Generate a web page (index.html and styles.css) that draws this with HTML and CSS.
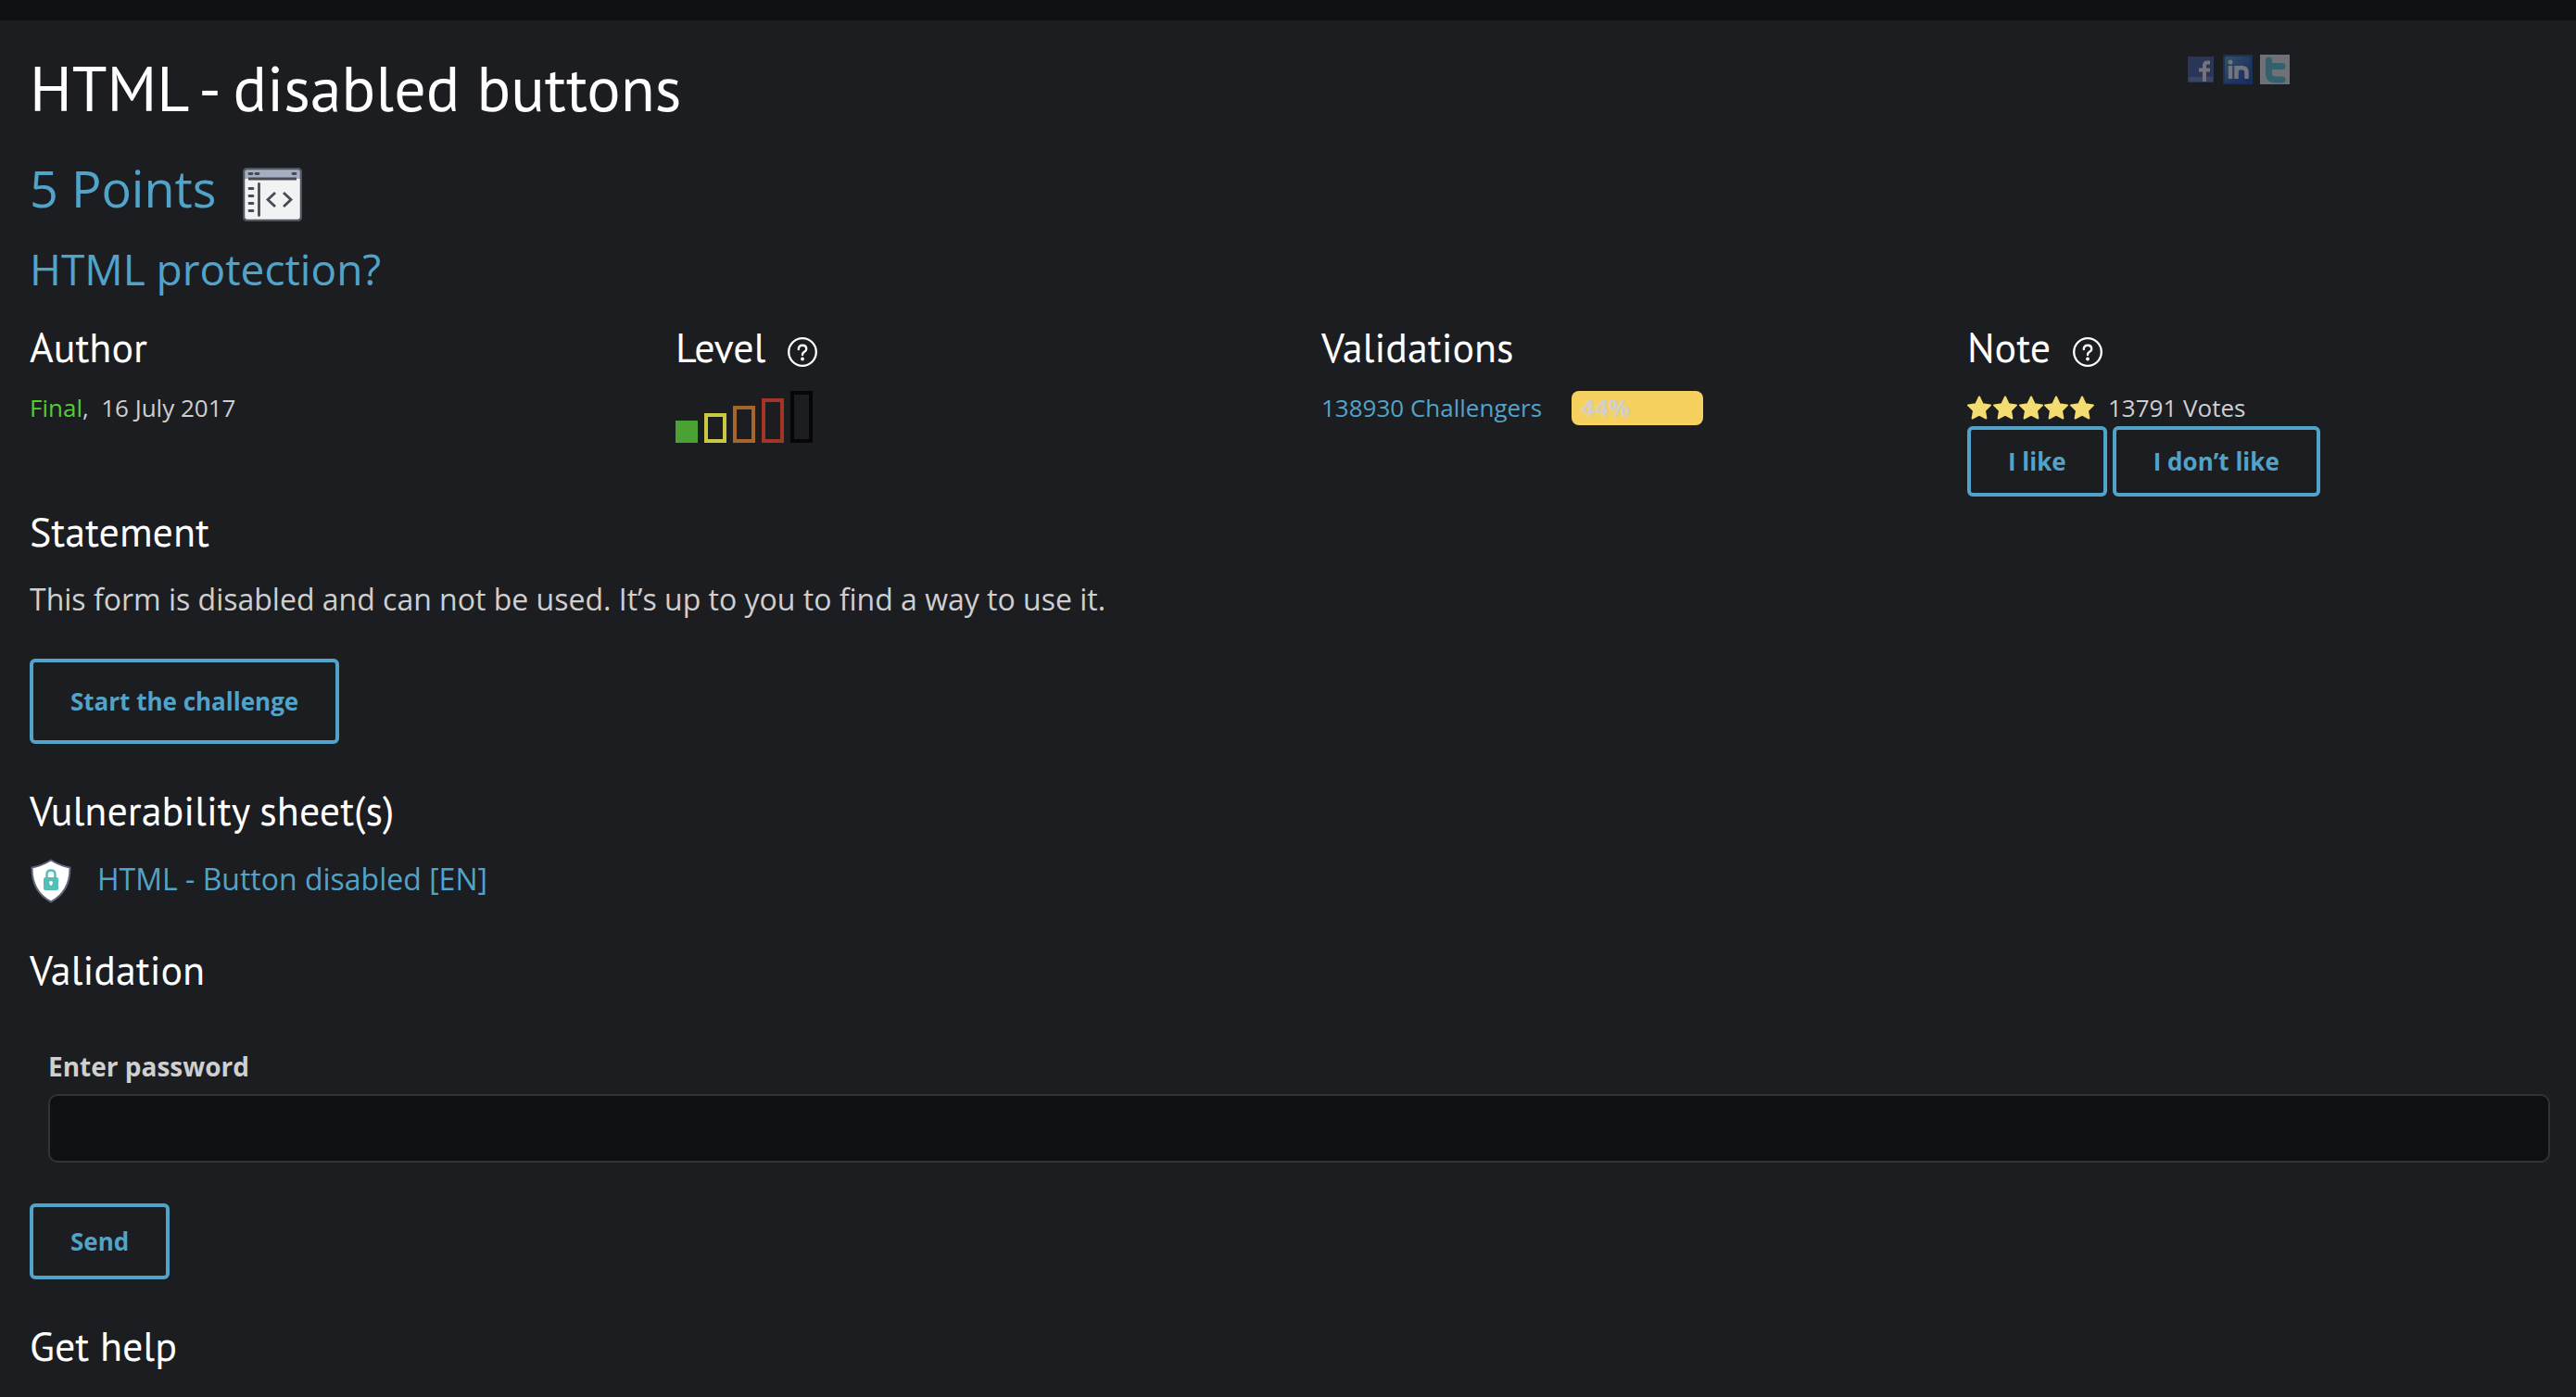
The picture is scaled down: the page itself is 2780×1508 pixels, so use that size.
FILE: index.html
```html
<!DOCTYPE html>
<html lang="en">
<head>
<meta charset="utf-8">
<title>HTML - disabled buttons</title>
<link rel="stylesheet" href="styles.css">
</head>
<body>
<div class="topbar"></div>
<main class="page">
  <header class="page-head">
    <h1 class="title">HTML - disabled buttons</h1>
    <nav class="share" aria-label="Share">
      <a href="#facebook" aria-label="Facebook"><svg width="32" height="32" viewBox="0 0 32 32"><rect x="2" y="2" width="28" height="28" fill="#38508f"/><rect x="3" y="24" width="26" height="5" fill="#5a70a8"/><path d="M26 8.500h-3q-3 0-3 3.500v17M14 16.500h12" fill="none" stroke="#c9c9d0" stroke-width="4"/></svg></a>
      <a href="#linkedin" aria-label="LinkedIn"><svg width="32" height="32" viewBox="0 0 32 32"><defs><linearGradient id="li" x1="0" y1="0" x2="1" y2="1"><stop offset="0" stop-color="#4a84a8"/><stop offset="1" stop-color="#1434a4"/></linearGradient></defs><rect width="32" height="32" fill="#1b4888"/><rect x="2" y="2" width="28" height="28" rx="2" fill="url(#li)"/><path d="M8 12v14M14.500 26V12M14.500 19q0-5 5-5 6 0 6 5v7" fill="none" stroke="#c9ccd4" stroke-width="4.500"/><circle cx="8" cy="8" r="2.500" fill="#c9ccd4"/></svg></a>
      <a href="#twitter" aria-label="Twitter"><svg width="32" height="32" viewBox="0 0 32 32"><rect width="32" height="32" fill="#c4c4cc"/><path d="M9.500 6v14q0 7 7 7H24M9.500 12.500H24" fill="none" stroke="#48a4b8" stroke-width="7" stroke-linecap="round"/></svg></a>
    </nav>
  </header>

  <div class="points"><span>5 Points</span>
    <svg width="64" height="58" viewBox="0 0 64 58"><rect x="1" y="1" width="62" height="56" rx="4" fill="#f1f3f3"/><path d="M2 12V5q0-3 3-3h54q3 0 3 3v7z" fill="#a6afc2"/><rect x="1" y="1" width="62" height="56" rx="4" fill="none" stroke="#50565e" stroke-width="2.500"/><path d="M6 12h52" stroke="#454b52" stroke-width="3"/><path d="M7 6.500h3M14 6.500h3M54 6.500h3M7 22.500h4M7 30.500h4M7 38.500h4M7 46.500h4M17.500 17.500v34" stroke="#454b52" stroke-width="2.800" stroke-linecap="round"/><path d="M35 27l-8 7.500 8 7.500M44 27l8 7.500-8 7.500" fill="none" stroke="#454b52" stroke-width="2.800"/></svg>
  </div>
  <p class="tagline">HTML protection?</p>

  <section class="facts">
    <div>
      <h2 class="heading">Author</h2>
      <p class="meta"><a class="author" href="#final">Final</a>,&nbsp; 16 July 2017</p>
    </div>
    <div>
      <h2 class="heading">Level <a class="help" href="#level-help" aria-label="About levels"><svg width="32" height="32" viewBox="0 0 32 32"><use href="#help-icon"/></svg></a></h2>
      <div class="level" role="img" aria-label="Very easy"><i class="bar bar-1"></i><i class="bar bar-2"></i><i class="bar bar-3"></i><i class="bar bar-4"></i><i class="bar bar-5"></i></div>
    </div>
    <div>
      <h2 class="heading">Validations</h2>
      <p class="meta"><a href="#challengers">138930 Challengers</a><span class="rate">44%</span></p>
    </div>
    <div>
      <h2 class="heading">Note <a class="help" href="#note-help" aria-label="About notes"><svg width="32" height="32" viewBox="0 0 32 32"><use href="#help-icon"/></svg></a></h2>
      <p class="meta"><svg class="stars" width="138" height="26" viewBox="0 0 138 26"><use href="#star"/><use href="#star" x="28"/><use href="#star" x="56"/><use href="#star" x="83"/><use href="#star" x="111"/></svg>13791 Votes</p>
      <div class="votes"><button class="btn btn-vote" type="button">I like</button><button class="btn btn-vote" type="button">I don’t like</button></div>
    </div>
  </section>

  <section class="statement">
    <h2 class="heading">Statement</h2>
    <p class="text">This form is disabled and can not be used. It’s up to you to find a way to use it.</p>
    <button class="btn btn-start" type="button">Start the challenge</button>
  </section>

  <section class="block">
    <h2 class="heading">Vulnerability sheet(s)</h2>
    <p class="text sheet"><svg width="44" height="52" viewBox="0 -4 44 52"><path d="M22 1.500Q11 8 1.500 9.500 1 35 22 46.500 43 35 42.500 9.500 33 8 22 1.500z" fill="#fff" stroke="#5b6478" stroke-width="2"/><rect x="14" y="20" width="16" height="14" rx="2" fill="#56bdb8"/><path d="M17.500 20v-3q0-4.500 4.500-4.500t4.500 4.500v3" fill="none" stroke="#56bdb8" stroke-width="2.500"/><circle cx="22" cy="26" r="2" fill="#fff"/><path d="M22 26v3" stroke="#fff" stroke-width="1.500"/></svg><a href="#sheet">HTML - Button disabled [EN]</a></p>
  </section>

  <section class="block">
    <h2 class="heading">Validation</h2>
    <form>
      <div class="field">
        <label for="password">Enter password</label>
        <input id="password" type="text">
      </div>
      <button class="btn btn-send" type="submit">Send</button>
    </form>
  </section>

  <section class="block">
    <h2 class="heading">Get help</h2>
  </section>
</main>
<svg class="defs" width="0" height="0" aria-hidden="true">
  <symbol id="help-icon" viewBox="0 0 32 32" width="32" height="32"><circle cx="16" cy="16" r="14.800" fill="none" stroke="#fff" stroke-width="2.300"/><path d="M11.800 13q0-4.200 4.200-4.200t4.200 3.900q0 2-2.300 3.200-1.900 1-1.900 3.200" fill="none" stroke="#fff" stroke-width="2.400" stroke-linecap="round"/><circle cx="16" cy="23.500" r="1.900" fill="#fff"/></symbol>
  <symbol id="star" viewBox="0 0 26 26" width="26" height="26"><path d="M13 1.500l3.600 7.700 8.400 1.200-6 6 1.400 8.100L13 20.600l-7.400 3.900L7 16.400l-6-6 8.400-1.200z" fill="#f3dd72" stroke="#f3dd72" stroke-width="2" stroke-linejoin="round"/></symbol>
</svg>
</body>
</html>
```
FILE: styles.css
```css
* { box-sizing: border-box; }

body {
  margin: 0;
  background: #1c1d21;
  color: #cfcfcf;
  font-family: "Open Sans", "Noto Sans", sans-serif;
  font-size: 26px;
  line-height: 40px;
}

h1, h2, p { margin: 0; font-weight: 400; }
a { color: #52a3c9; text-decoration: none; }
svg { display: block; flex: none; }
.defs { position: absolute; }

.topbar { height: 22px; background: #0f1014; }
.page { padding: 25px 8px 20px 32px; }

.page-head { display: flex; justify-content: space-between; align-items: flex-start; }
.title, .heading { font-family: "PT Sans", "Noto Sans", sans-serif; color: #fff; }
.title { font-size: 68px; line-height: 96px; }
.share { display: flex; gap: 8px; padding-top: 12px; margin-right: 11%; opacity: 0.5; }

.points { display: flex; align-items: center; gap: 28px; margin-top: 20px; font-size: 54px; line-height: 80px; color: #52a3c9; }
.points svg { margin-top: 14px; }
.tagline { margin-top: 15px; font-size: 46px; line-height: 64px; color: #52a3c9; }

.heading { display: flex; align-items: center; font-size: 44px; line-height: 60px; }
.facts { display: grid; grid-template-columns: repeat(4, 1fr); gap: 48px; margin-top: 23px; }
.meta { display: flex; align-items: center; height: 40px; margin-top: 15px; white-space: pre; }
.author { color: #55cc33; }
.help { margin: 10px 0 0 24px; }

.level { display: flex; align-items: flex-end; gap: 7px; margin-top: 17px; }
.bar { width: 24px; border: 4px solid; }
.bar-1 { height: 24px; color: #4aa234; background: #4aa234; }
.bar-2 { height: 32px; color: #c9c944; }
.bar-3 { height: 40px; color: #a6652a; }
.bar-4 { height: 48px; color: #a43526; }
.bar-5 { height: 56px; color: #060606; }

.rate { width: 142px; margin-left: 32px; padding-left: 10px; border-radius: 8px; background: #f6d15f; font-weight: 700; line-height: 37px; }
.stars { margin-right: 14px; }
.votes { display: flex; gap: 6px; }

.btn { padding: 0 40px; border: 4px solid #52a3c9; border-radius: 6px; background: none; color: #52a3c9; font-family: inherit; font-size: 26px; font-weight: 700; line-height: 40px; }
.btn-vote { height: 76px; }
.btn-start { height: 92px; margin-top: 39px; }
.btn-send { height: 82px; margin-top: 44px; }

.statement { margin-top: 8px; }
.block { margin-top: 42px; }
.text { margin-top: 18px; font-size: 32px; line-height: 50px; }
.sheet { display: flex; align-items: center; gap: 28px; padding-left: 1px; }

.field { padding: 0 20px; margin-top: 54px; }
.field label { display: block; font-size: 28px; font-weight: 700; }
.field input { display: block; width: 100%; height: 74px; margin-top: 10px; padding: 0 16px; border: 2px solid #333; border-radius: 10px; background: #0f1014; color: inherit; font: inherit; }
```
